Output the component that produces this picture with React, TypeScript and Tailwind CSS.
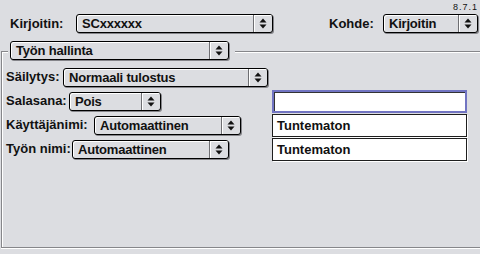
import React from 'react';

const Arrows: React.FC = () => (
  <svg width="8" height="11" viewBox="0 0 8 11" className="block">
    <polygon points="0.5,4.5 4,0.5 7.5,4.5" fill="#111" />
    <polygon points="0.5,6.5 7.5,6.5 4,10.5" fill="#111" />
  </svg>
);

interface PopupProps {
  label: string;
  className: string;
}

const Popup: React.FC<PopupProps> = ({ label, className }) => (
  <div
    className={`flex h-[19px] shrink-0 items-stretch rounded-[3px] border border-black bg-[#dcdde1] shadow-[1px_1px_0_#85858a,inset_1px_1px_0_#fff] ${className}`}
  >
    <span className="flex-1 truncate whitespace-nowrap pl-[5px] leading-[17px] tracking-[-0.2px]">{label}</span>
    <span className="flex w-[19px] items-center justify-center rounded-r-[2px] border-l border-[#6e6e72] shadow-[inset_1px_1px_0_#fff]">
      <Arrows />
    </span>
  </div>
);

interface FieldProps {
  value?: string;
  focused?: boolean;
}

const Field: React.FC<FieldProps> = ({ value, focused }) => (
  <div
    className={
      focused
        ? 'h-[23px] w-[195px] shrink-0 border-2 border-[#7174c2] bg-white shadow-[inset_1px_1px_0_#333]'
        : 'h-[23px] w-[195px] shrink-0 border border-[#1e1e1e] bg-white pl-[4px] leading-[21px] shadow-[1px_1px_0_#fff]'
    }
  >
    {value}
  </div>
);

export default function App() {
  return (
    <div
      className="h-[254px] w-[480px] overflow-hidden bg-[#dcdde1] text-[13px] font-bold text-[#111]"
      style={{ fontFamily: '"Liberation Sans", Arial, sans-serif' }}
    >
      {/* version */}
      <div className="flex h-[14px] justify-end pr-[2px] pt-[3px] text-[9px] font-normal leading-none tracking-[1px]">
        8.7.1
      </div>

      {/* printer row */}
      <div className="flex h-[19px] items-center pl-[10px] pr-[2px]">
        <span className="w-[66px] shrink-0">Kirjoitin:</span>
        <Popup label="SCxxxxxx" className="w-[197px]" />
        <span className="ml-auto w-[54px] shrink-0">Kohde:</span>
        <Popup label="Kirjoitin" className="w-[95px]" />
      </div>

      {/* group box */}
      <div className="relative ml-[1px] mt-[18px] h-[197px] border-b border-l border-t border-[#86868a] pl-[4px] pt-[13px] shadow-[inset_1px_1px_0_#fff,0_1px_0_#fff]">
        <div className="absolute left-[6px] top-[-11px] bg-[#dcdde1] pl-[2px] pr-[6px]">
          <Popup label="Työn hallinta" className="w-[219px]" />
        </div>

        <div className="flex h-[24px] items-center">
          <span className="w-[57px] shrink-0 whitespace-nowrap">Säilytys:</span>
          <Popup label="Normaali tulostus" className="w-[205px]" />
        </div>
        <div className="flex h-[24px] items-center">
          <div className="flex w-[266px] shrink-0 items-center">
            <span className="w-[63px] shrink-0 whitespace-nowrap">Salasana:</span>
            <Popup label="Pois" className="w-[92px]" />
          </div>
          <Field focused />
        </div>
        <div className="flex h-[24px] items-center">
          <div className="flex w-[266px] shrink-0 items-center">
            <span className="w-[88px] shrink-0 whitespace-nowrap">Käyttäjänimi:</span>
            <Popup label="Automaattinen" className="w-[147px]" />
          </div>
          <Field value="Tuntematon" />
        </div>
        <div className="flex h-[24px] items-center">
          <div className="flex w-[266px] shrink-0 items-center">
            <span className="w-[66px] shrink-0 whitespace-nowrap">Työn nimi:</span>
            <Popup label="Automaattinen" className="w-[157px]" />
          </div>
          <Field value="Tuntematon" />
        </div>
      </div>
    </div>
  );
}
